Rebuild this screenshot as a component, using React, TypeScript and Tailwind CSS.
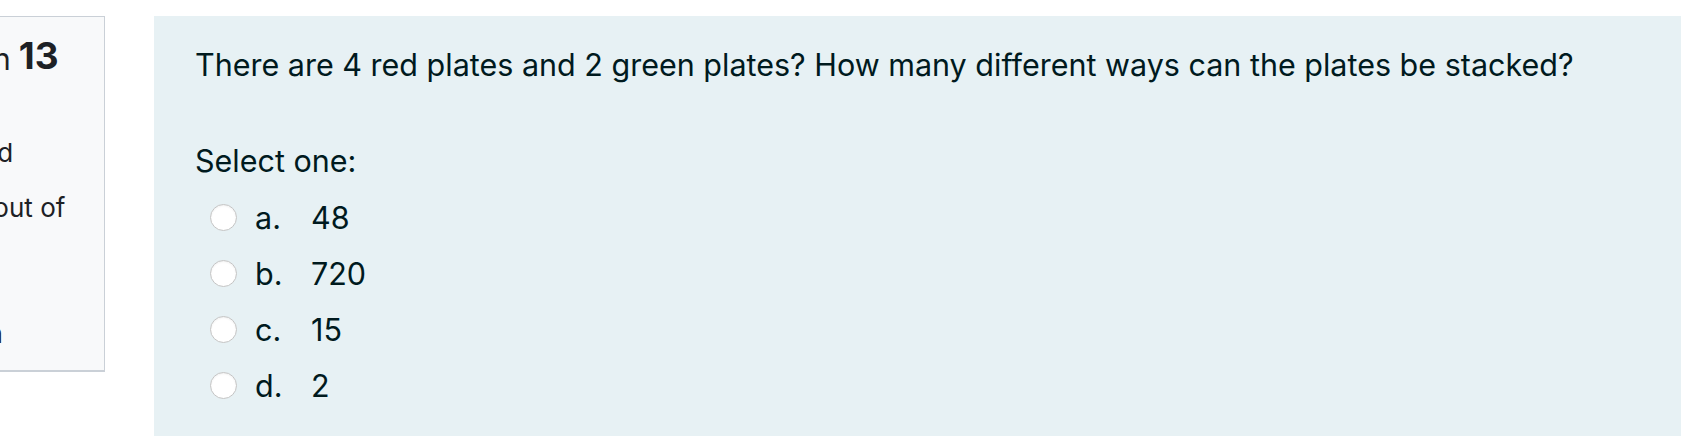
import React from "react";

const options = [
  { k: "a.", v: "48" },
  { k: "b.", v: "720" },
  { k: "c.", v: "15" },
  { k: "d.", v: "2" },
];

export default function App() {
  return (
    <div
      className="w-[1681px] h-[436px] overflow-hidden bg-white flex items-start pt-[16px]"
      style={{ fontFamily: "Inter, 'Noto Sans', sans-serif" }}
    >
      {/* info box, mostly off-screen to the left */}
      <div className="shrink-0 w-[300px] ml-[-195px] h-[356px] border border-[#cad0d7] border-b-2 bg-[#f8f9fa] text-[#1d2125] flex flex-col pl-[87px]">
        <div className="h-[57px] flex items-end whitespace-nowrap leading-none ml-[-9px]">
          <span className="text-[30px]">Question</span>
          <span className="text-[37px] font-bold ml-[8px]">13</span>
        </div>
        <div className="text-[26px] leading-[39px] mt-[20px] whitespace-nowrap">Not yet</div>
        <div className="text-[26px] leading-[39px] whitespace-nowrap">answered</div>
        <div className="text-[26px] leading-[39px] mt-[16px] whitespace-nowrap">Marked out of</div>
        <div className="text-[26px] leading-[39px] whitespace-nowrap">1.00</div>
        <div className="text-[26px] leading-[39px] mt-[48px] ml-[4px] whitespace-nowrap">question</div>
      </div>

      {/* formulation */}
      <div className="ml-[49px] flex-1 h-[440px] bg-[#e7f1f4] text-[#001a1e] pl-[41px] pt-[26px]">
        <div className="text-[30.5px] leading-[45px] whitespace-nowrap">
          There are 4 red plates and 2 green plates? How many different ways can the plates be stacked?
        </div>
        <div className="text-[30.5px] leading-[45px] mt-[51px]">Select one:</div>
        <div className="flex flex-col mt-[6px]">
          {options.map((o) => (
            <div key={o.k} className="h-[56px] flex items-center text-[30.5px] leading-[45px]">
              <span className="ml-[15px] w-[27px] h-[27px] rounded-full bg-white border border-[#c4c4c4] shadow-[inset_0_1px_2px_rgba(0,0,0,0.06)] shrink-0" />
              <span className="ml-[18px] w-[56px]">{o.k}</span>
              <span>{o.v}</span>
            </div>
          ))}
        </div>
      </div>
    </div>
  );
}
